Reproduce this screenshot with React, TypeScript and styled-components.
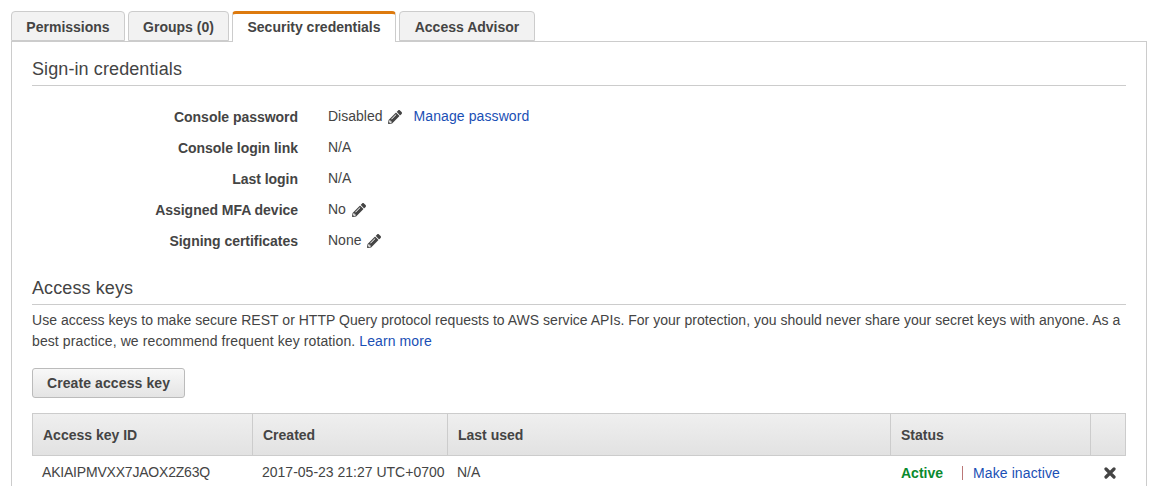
import React from "react";
import styled, { createGlobalStyle } from "styled-components";
import { FaPencilAlt } from "react-icons/fa";

const Global = createGlobalStyle`
  html, body { margin: 0; padding: 0; background: #fff; }
  body { width: 1158px; height: 487px; overflow: hidden; font-family: "Liberation Sans", Arial, sans-serif; font-size: 14px; color: #444; }
`;

const Page = styled.div`
  padding: 11px 11px 0 11px;
  width: 1136px;
`;

const TabBar = styled.div`
  display: flex;
  gap: 3px;
  height: 31px;
  position: relative;
  z-index: 1;
`;

const Tab = styled.div<{ $active?: boolean; $width: number }>`
  box-sizing: border-box;
  width: ${(p) => p.$width}px;
  height: ${(p) => (p.$active ? 31 : 30)}px;
  padding: ${(p) => (p.$active ? "0 0 2px" : "1px 0 0")};
  display: flex;
  align-items: center;
  justify-content: center;
  font-weight: bold;
  font-size: 14px;
  color: #444;
  background: ${(p) => (p.$active ? "#fff" : "#f2f2f2")};
  border: 1px solid #ccc;
  border-bottom: ${(p) => (p.$active ? "none" : "1px solid #ccc")};
  border-top: ${(p) => (p.$active ? "3px solid #dd7a0e" : "1px solid #ccc")};
  border-radius: 4px 4px 0 0;
`;

const Panel = styled.div`
  box-sizing: border-box;
  border: 1px solid #ccc;
  border-bottom: none;
  height: 445px;
  padding: 15px 20px 0 20px;
  margin-top: -1px;
`;

const Heading = styled.h2`
  margin: 0;
  box-sizing: border-box;
  font-size: 18px;
  font-weight: normal;
  line-height: 24px;
  height: 29px;
  letter-spacing: 0.1px;
  color: #444;
  border-bottom: 1px solid #ccc;
`;

const Rows = styled.div`
  margin-top: 15px;
  margin-bottom: 20px;
`;

const Row = styled.div`
  display: grid;
  grid-template-columns: 266px 1fr;
  grid-template-rows: 31px;
  column-gap: 30px;
  line-height: 31px;
`;

const Label = styled.div`
  font-weight: bold;
  text-align: right;
  padding-top: 1px;
  letter-spacing: -0.03px;
  color: #444;
`;

const Value = styled.div`
  display: flex;
  align-items: center;
  height: 31px;
  color: #444;
`;

const Link = styled.a`
  color: #1a4fb5;
  letter-spacing: 0.1px;
  text-decoration: none;
`;

const PasswordLink = styled(Link)`
  margin-left: 11px;
`;

const Pencil = styled(FaPencilAlt)`
  width: 14px;
  height: 14px;
  margin-left: 6px;
  color: #444;
`;

const Description = styled.p`
  margin: 5px 0 0;
  line-height: 21px;
  font-size: 14px;
  color: #444;
`;

const DescriptionLine = styled.span<{ $spacing: number }>`
  display: block;
  white-space: nowrap;
  letter-spacing: ${(p) => p.$spacing}px;
`;

const Button = styled.button`
  display: block;
  box-sizing: border-box;
  width: 153px;
  height: 30px;
  margin-top: 16px;
  padding: 0;
  font-family: inherit;
  font-size: 14px;
  font-weight: bold;
  letter-spacing: 0.1px;
  color: #444;
  background: linear-gradient(#f8f8f8, #e4e4e4);
  border: 1px solid #bbb;
  border-radius: 3px;
`;

const Table = styled.div`
  margin-top: 15px;
  display: grid;
  grid-template-columns: 220px 195px 443px 200px 36px;
`;

const HeadCell = styled.div<{ $last?: boolean }>`
  box-sizing: border-box;
  height: 43px;
  display: flex;
  align-items: center;
  padding-left: 10px;
  font-weight: bold;
  color: #444;
  background: linear-gradient(#efefef, #e2e2e2);
  border: 1px solid #ccc;
  border-right-width: ${(p) => (p.$last ? 1 : 0)}px;
`;

const Cell = styled.div<{ $inset: number; $drop?: number }>`
  height: 32px;
  box-sizing: border-box;
  display: flex;
  align-items: center;
  padding-left: ${(p) => p.$inset}px;
  padding-top: ${(p) => p.$drop ?? 0}px;
  white-space: nowrap;
  color: #444;
`;

const KeyId = styled.span`
  letter-spacing: -0.2px;
`;

const Active = styled.span`
  font-weight: bold;
  color: #0a8a2e;
`;

const Divider = styled.span`
  width: 1px;
  height: 14px;
  margin: 0 10px 0 19px;
  background: #b77;
`;

const Remove = styled.svg`
  width: 12px;
  height: 12px;
  color: #444;
`;

const tabs = [
  { label: "Permissions", width: 114 },
  { label: "Groups (0)", width: 101 },
  { label: "Security credentials", width: 164, active: true },
  { label: "Access Advisor", width: 136 },
];

const rows: { label: string; value: string; edit?: boolean; link?: string }[] = [
  { label: "Console password", value: "Disabled", edit: true, link: "Manage password" },
  { label: "Console login link", value: "N/A" },
  { label: "Last login", value: "N/A" },
  { label: "Assigned MFA device", value: "No", edit: true },
  { label: "Signing certificates", value: "None", edit: true },
];

export default function App() {
  return (
    <Page>
      <Global />
      <TabBar>
        {tabs.map((t) => (
          <Tab key={t.label} $active={t.active} $width={t.width}>
            {t.label}
          </Tab>
        ))}
      </TabBar>
      <Panel>
        <Heading>Sign-in credentials</Heading>
        <Rows>
          {rows.map((r) => (
            <Row key={r.label}>
              <Label>{r.label}</Label>
              <Value>
                {r.value}
                {r.edit && <Pencil />}
                {r.link && <PasswordLink href="#">{r.link}</PasswordLink>}
              </Value>
            </Row>
          ))}
        </Rows>
        <Heading>Access keys</Heading>
        <Description>
          <DescriptionLine $spacing={0.023}>
            Use access keys to make secure REST or HTTP Query protocol requests to AWS service APIs. For your protection, you
            should never share your secret keys with anyone. As a
          </DescriptionLine>
          <DescriptionLine $spacing={0.1}>
            best practice, we recommend frequent key rotation. <Link href="#">Learn more</Link>
          </DescriptionLine>
        </Description>
        <Button>Create access key</Button>
        <Table>
          <HeadCell>Access key ID</HeadCell>
          <HeadCell>Created</HeadCell>
          <HeadCell>Last used</HeadCell>
          <HeadCell>Status</HeadCell>
          <HeadCell $last />
          <Cell $inset={10}>
            <KeyId>AKIAIPMVXX7JAOX2Z63Q</KeyId>
          </Cell>
          <Cell $inset={10}>2017-05-23 21:27 UTC+0700</Cell>
          <Cell $inset={10}>N/A</Cell>
          <Cell $inset={11} $drop={2}>
            <Active>Active</Active>
            <Divider />
            <Link href="#">Make inactive</Link>
          </Cell>
          <Cell $inset={14} $drop={2}>
            <Remove viewBox="0 0 12 12">
              <path d="M2 2 L10 10 M10 2 L2 10" stroke="currentColor" strokeWidth="3.2" strokeLinecap="round" fill="none" />
            </Remove>
          </Cell>
        </Table>
      </Panel>
    </Page>
  );
}
